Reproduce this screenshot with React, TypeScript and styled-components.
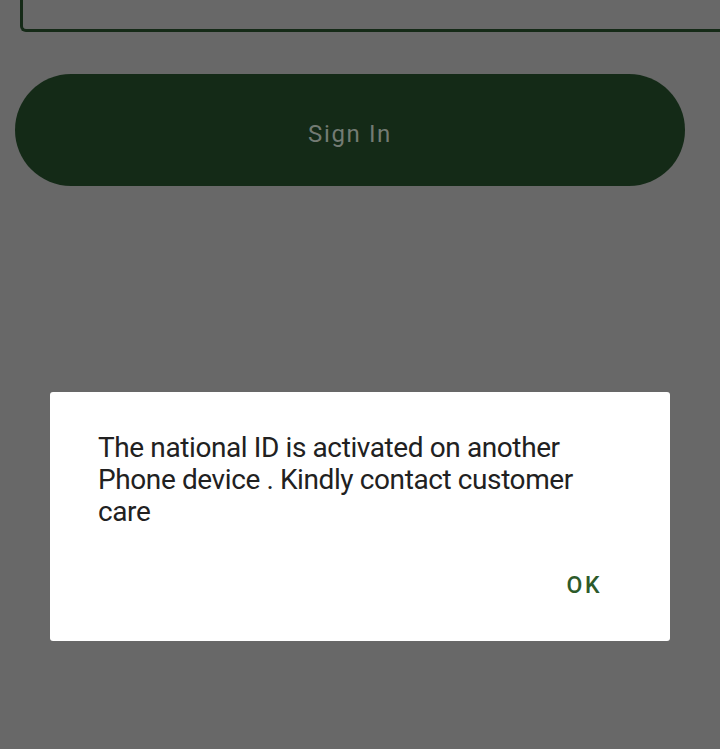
import styled, { createGlobalStyle } from 'styled-components';

const GlobalStyle = createGlobalStyle`
  html, body {
    margin: 0;
    padding: 0;
    background: #686868;
    font-family: Roboto, "Noto Sans", sans-serif;
    overflow: hidden;
  }
`;

const Page = styled.div`
  width: 720px;
  height: 749px;
  display: flex;
  flex-direction: column;
  position: relative;
`;

const InputBox = styled.div`
  margin: -40px 0 0 20px;
  height: 66px;
  border: 3px solid #152a17;
  border-right: none;
  border-radius: 6px 0 0 6px;
`;

const SignInButton = styled.button`
  margin: 42px 35px 0 15px;
  height: 112px;
  border: none;
  border-radius: 56px;
  background: #142a17;
  color: #737b73;
  font-family: Roboto, sans-serif;
  font-size: 24px;
  letter-spacing: 1.6px;
  padding: 8px 0 0;
`;

const Dialog = styled.div`
  position: absolute;
  top: 392px;
  left: 50px;
  width: 620px;
  height: 249px;
  box-sizing: border-box;
  background: #ffffff;
  border-radius: 3px;
  padding: 40px 48px 0 48px;
  display: flex;
  flex-direction: column;
`;

const Message = styled.p`
  margin: 0;
  font-size: 28px;
  line-height: 32px;
  letter-spacing: -0.4px;
  color: #212121;
`;

const Actions = styled.div`
  display: flex;
  justify-content: flex-end;
  margin-top: 44px;
  padding-right: 20px;
`;

const OkButton = styled.button`
  border: none;
  background: none;
  padding: 0;
  font-family: Roboto, sans-serif;
  font-size: 23px;
  line-height: 27px;
  font-weight: 500;
  letter-spacing: 2.5px;
  color: #2d5a2a;
`;

export default function App() {
  return (
    <Page>
      <GlobalStyle />
      <InputBox />
      <SignInButton>Sign In</SignInButton>
      <Dialog>
        <Message>
          The national ID is activated on another Phone device . Kindly contact customer care
        </Message>
        <Actions>
          <OkButton>OK</OkButton>
        </Actions>
      </Dialog>
    </Page>
  );
}
